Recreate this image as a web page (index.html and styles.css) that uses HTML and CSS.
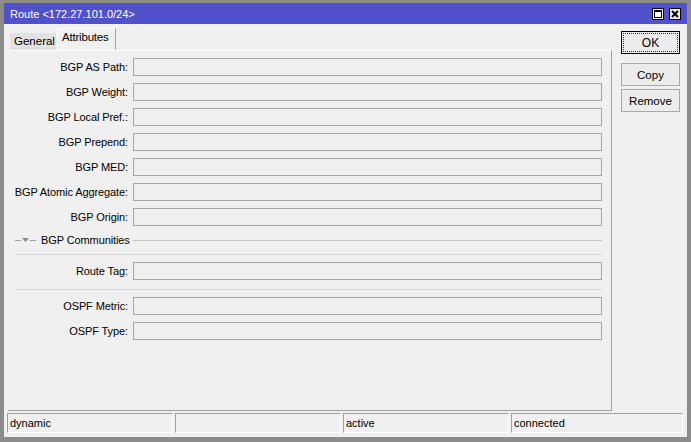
FILE: index.html
```html
<!DOCTYPE html>
<html>
<head>
<meta charset="utf-8">
<link rel="stylesheet" href="styles.css">
</head>
<body>
<div class="window">
  <div class="titlebar">
    <span class="title">Route &lt;172.27.101.0/24&gt;</span>
    <div class="tbtns">
      <span class="tbtn max"><svg width="12" height="12" viewBox="0 0 12 12"><rect x="0.5" y="0.5" width="11" height="11" fill="#f0f0f0" stroke="#000"/><rect x="2.5" y="2.5" width="7" height="7" fill="#fff" stroke="#000"/><line x1="2" y1="3" x2="10" y2="3" stroke="#000" stroke-width="2"/></svg></span>
      <span class="tbtn close"><svg width="12" height="12" viewBox="0 0 12 12"><rect x="0.5" y="0.5" width="11" height="11" fill="#f0f0f0" stroke="#000"/><path d="M3 3 L9 9 M9 3 L3 9" stroke="#000" stroke-width="2"/></svg></span>
    </div>
  </div>
  <div class="content">
    <div class="top">
      <div class="main">
        <div class="tabs">
          <div class="tab">General</div>
          <div class="tab active">Attributes</div>
        </div>
        <div class="panel">
          <div class="row"><label>BGP AS Path:</label><div class="field"></div></div>
          <div class="row"><label>BGP Weight:</label><div class="field"></div></div>
          <div class="row"><label>BGP Local Pref.:</label><div class="field"></div></div>
          <div class="row"><label>BGP Prepend:</label><div class="field"></div></div>
          <div class="row"><label>BGP MED:</label><div class="field"></div></div>
          <div class="row"><label>BGP Atomic Aggregate:</label><div class="field"></div></div>
          <div class="row"><label>BGP Origin:</label><div class="field"></div></div>
          <div class="group">
            <span class="dash"></span>
            <svg class="tri" width="7" height="4" viewBox="0 0 7 4"><path d="M0 0 H7 L3.5 4 Z" fill="#8a8a8a"/></svg>
            <span class="dash"></span>
            <span class="gtitle">BGP Communities</span>
            <span class="gline"></span>
          </div>
          <div class="sep"></div>
          <div class="row"><label>Route Tag:</label><div class="field"></div></div>
          <div class="sep sep2"></div>
          <div class="row"><label>OSPF Metric:</label><div class="field"></div></div>
          <div class="row"><label>OSPF Type:</label><div class="field"></div></div>
        </div>
      </div>
      <div class="side">
        <div class="btn ok"><span>OK</span></div>
        <div class="btn copy"><span>Copy</span></div>
        <div class="btn"><span>Remove</span></div>
      </div>
    </div>
    <div class="status">
      <div class="cell">dynamic</div>
      <div class="cell"></div>
      <div class="cell">active</div>
      <div class="cell last">connected</div>
    </div>
  </div>
</div>
</body>
</html>
```

FILE: styles.css
```css
html, body {
  margin: 0;
  padding: 0;
  width: 691px;
  height: 442px;
  overflow: hidden;
  font-family: "Liberation Sans", Arial, sans-serif;
  font-size: 11px;
  color: #000;
}
.window {
  box-sizing: border-box;
  width: 691px;
  height: 442px;
  border-style: solid;
  border-color: #8c8c8c;
  border-width: 3px 4px 5px 4px;
  background: #f0f0f0;
  display: flex;
  flex-direction: column;
}
.titlebar {
  height: 21px;
  background: #5151cb;
  color: #fff;
  display: flex;
  align-items: center;
  justify-content: space-between;
  padding: 0 6px 0 6px;
  font-size: 11px;
}
.tbtns { display: flex; gap: 5px; align-items: center; }
.tbtn { display: block; width: 12px; height: 12px; }
.tbtn svg { display: block; }
.content {
  flex: 1;
  display: flex;
  flex-direction: column;
}
.top {
  flex: 1;
  display: flex;
}
.main {
  margin-left: 4px;
  width: 604px;
  display: flex;
  flex-direction: column;
}
.tabs {
  height: 22px;
  margin-top: 4px;
  display: flex;
  align-items: flex-end;
}
.tab {
  box-sizing: border-box;
  height: 17px;
  width: 46px;
  margin-left: 2px;
  background: #e2e2e2;
  padding-left: 4px;
  line-height: 17px;
  font-size: 11.5px;
  white-space: nowrap;
}
.tab.active {
  height: 22px;
  width: 59px;
  margin-left: 1px;
  background: #f0f0f0;
  border-top: 1px solid #fff;
  border-left: 1px solid #fff;
  border-right: 1px solid #a0a0a0;
  padding-left: 4px;
  line-height: 16px;
  font-size: 11.5px;
  letter-spacing: -0.2px;
}
.panel {
  box-sizing: border-box;
  flex: 1;
  border-top: 1px solid #fff;
  border-right: 1px solid #a0a0a0;
  border-bottom: 1px solid #a0a0a0;
  padding-top: 7px;
  display: flex;
  flex-direction: column;
  gap: 7px;
}
.row {
  display: flex;
  height: 18px;
  align-items: center;
}
.row label {
  width: 120px;
  text-align: right;
  padding-right: 5px;
  font-size: 11px;
  letter-spacing: -0.1px;
}
.field {
  box-sizing: border-box;
  width: 469px;
  height: 18px;
  border: 1px solid #a5a5a5;
  background: #f0f0f0;
}
.group {
  height: 14px;
  display: flex;
  align-items: center;
  padding-left: 7px;
}
.dash {
  width: 6px;
  height: 1px;
  background: #a0a0a0;
}
.tri { margin: 0 1px; display: block; }
.gtitle {
  margin-left: 5px;
  margin-right: 3px;
  font-size: 11px;
  letter-spacing: -0.1px;
}
.gline {
  flex: 1;
  height: 1px;
  background: #c8c8c8;
  margin-right: 9px;
}
.sep {
  height: 1px;
  background: #d6d6d6;
  margin: 0 9px 0 8px;
}
.sep2 { margin-top: 2px; }
.side {
  margin-left: 9px;
  margin-top: 7px;
  display: flex;
  flex-direction: column;
}
.btn {
  box-sizing: border-box;
  width: 59px;
  height: 23px;
  border: 1px solid #a8a8a8;
  background: #ececec;
  display: flex;
  align-items: center;
  justify-content: center;
  font-size: 11.5px;
  margin-bottom: 3px;
}
.btn.ok {
  border: 1px solid #000;
  padding: 1px;
  margin-bottom: 9px;
  font-size: 12px;
}
.btn.ok span {
  box-sizing: border-box;
  width: 100%;
  height: 100%;
  border: 1px dotted #333;
  display: flex;
  align-items: center;
  justify-content: center;
}
.status {
  height: 20px;
  margin: 2px 4px 4px 3px;
  display: flex;
  gap: 2px;
}
.cell {
  width: 166px;
  box-sizing: border-box;
  border-top: 1px solid #a0a0a0;
  border-left: 1px solid #a0a0a0;
  border-right: 1px solid #fff;
  border-bottom: 1px solid #fff;
  padding-left: 2px;
  line-height: 18px;
  font-size: 11px;
}
.cell.last { flex: 1; width: auto; }
```
